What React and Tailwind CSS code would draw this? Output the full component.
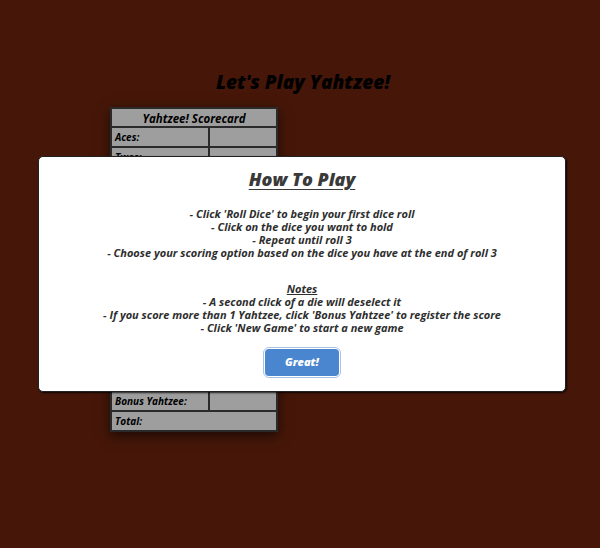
import React from "react";

const rows = [
  "Aces:", "Twos:", "Threes:", "Fours:", "Fives:", "Sixes:",
  "3 of a Kind:", "4 of a Kind:", "Full House:", "Sm. Straight:", "Lg. Straight:",
  "Yahtzee:", "Chance:", "Bonus Yahtzee:",
];

export default function App() {
  return (
    <div className="relative min-h-[548px] w-full bg-[#461709] font-['Open_Sans',sans-serif] italic font-bold">
      <div className="flex flex-col pt-[68px]">
        <h1 className="ml-[6px] text-center text-[19px] leading-[28px] font-extrabold text-black">Let's Play Yahtzee!</h1>
        <div className="mt-[11px] pl-[110px]">
          <div className="w-[168px] border-2 border-[#2a2a2a] bg-[#9e9e9e] text-black shadow-[0_4px_12px_rgba(0,0,0,0.6)]">
            <div className="h-[19px] border-b-2 border-[#2a2a2a] text-center text-[11.5px] leading-[19px]">Yahtzee! Scorecard</div>
            {rows.map((r) => (
              <div key={r} className="flex h-[20.3px] border-b-2 border-[#2a2a2a] text-[10px] leading-[18px]">
                <div className="w-[98px] border-r-2 border-[#2a2a2a] pl-[3px]">{r}</div>
                <div className="flex-1"></div>
              </div>
            ))}
            <div className="h-[18px] pl-[3px] text-[10px] leading-[18px]">Total:</div>
          </div>
        </div>
      </div>

      <div className="absolute inset-0 flex items-center justify-center">
        <div className="ml-[4px] w-[528px] h-[236px] rounded-[5px] border border-[#222] bg-white text-[#2e2e2e] shadow-[1px_1px_2px_rgba(0,0,0,0.8)] flex flex-col items-center">
          <div className="mt-[9px] text-[18px] leading-[26px] font-extrabold underline underline-offset-[3px] text-[#3a3a3a]">How To Play</div>
          <div className="mt-[15px] text-center text-[11px] leading-[13px]">
            <div>- Click 'Roll Dice' to begin your first dice roll</div>
            <div>- Click on the dice you want to hold</div>
            <div>- Repeat until roll 3</div>
            <div>- Choose your scoring option based on the dice you have at the end of roll 3</div>
          </div>
          <div className="mt-[23px] text-center text-[11px] leading-[13px]">
            <div className="underline">Notes</div>
            <div>- A second click of a die will deselect it</div>
            <div>- If you score more than 1 Yahtzee, click 'Bonus Yahtzee' to register the score</div>
            <div>- Click 'New Game' to start a new game</div>
          </div>
          <button className="mt-[15px] h-[27px] w-[74px] rounded-[4px] bg-[#4a86d0] text-[11px] text-white font-extrabold italic outline outline-1 outline-offset-[1px] outline-[#a9c3e6]">Great!</button>
        </div>
      </div>
    </div>
  );
}
